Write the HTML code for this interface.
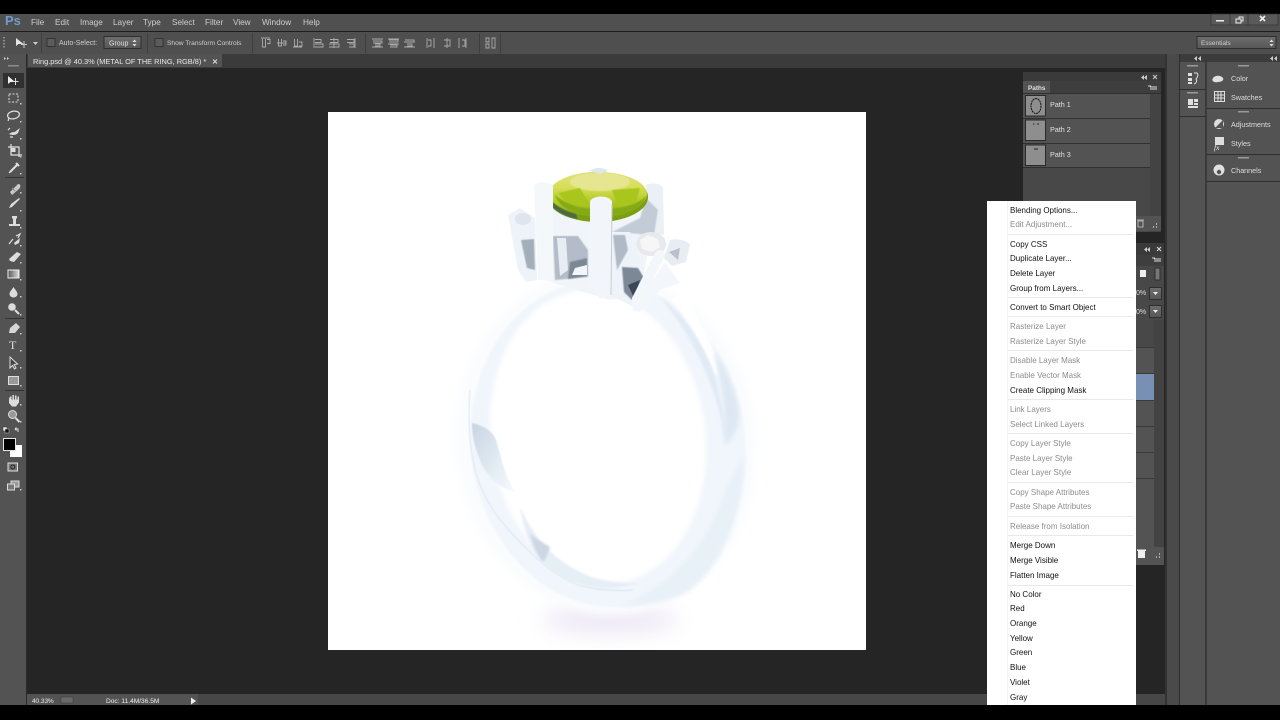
<!DOCTYPE html>
<html lang="en"><head><meta charset="utf-8"><title>Photoshop</title>
<style>
html,body{margin:0;padding:0;background:#000;width:1280px;height:720px;overflow:hidden}
svg{display:block;position:absolute;left:0;top:0;font-family:"Liberation Sans",sans-serif;filter:blur(.3px)}
text{font-size:7.2px;fill:#e2e2e2}
.m text{font-size:8.2px;fill:#cfcfcf}
.k text{fill:#111;font-size:8.7px}
.k text.d{fill:#8c8c8c}
.t{fill:none;stroke:#e0e0e0;stroke-width:1.2}
.f{fill:#dcdcdc}
.o{fill:none;stroke:#ababab;stroke-width:.9}
</style></head><body>
<svg width="1280" height="720" viewBox="0 0 1280 720" xmlns="http://www.w3.org/2000/svg">
<defs>
<filter id="b1" x="-20%" y="-20%" width="140%" height="140%"><feGaussianBlur stdDeviation="1"/></filter>
<filter id="b2" x="-30%" y="-30%" width="160%" height="160%"><feGaussianBlur stdDeviation="2.500"/></filter>
<filter id="b3" x="-30%" y="-30%" width="160%" height="160%"><feGaussianBlur stdDeviation="4"/></filter>
<filter id="b8" x="-40%" y="-60%" width="180%" height="220%"><feGaussianBlur stdDeviation="11"/></filter>
<filter id="s" x="-10%" y="-10%" width="120%" height="120%"><feGaussianBlur stdDeviation="0.5"/></filter>
<linearGradient id="gem" x1="0" y1="0" x2="0" y2="1"><stop offset="0" stop-color="#e2e27c"/><stop offset=".35" stop-color="#d6de58"/><stop offset=".65" stop-color="#b4cc28"/><stop offset="1" stop-color="#8cb014"/></linearGradient>
<linearGradient id="btn" x1="0" y1="0" x2="0" y2="1"><stop offset="0" stop-color="#6e6e6e"/><stop offset="1" stop-color="#565656"/></linearGradient>
<linearGradient id="wedge" x1="0" y1="0" x2="1" y2="1"><stop offset="0" stop-color="#c9d5e2"/><stop offset=".6" stop-color="#e4ecf4"/><stop offset="1" stop-color="#f7fafd"/></linearGradient>
<linearGradient id="grad" x1="0" y1="0" x2="1" y2="0"><stop offset="0" stop-color="#555"/><stop offset="1" stop-color="#ddd"/></linearGradient>
</defs>

<!-- base -->
<rect width="1280" height="720" fill="#000"/>
<rect y="14" width="1280" height="691" fill="#252525"/>
<!-- menu bar -->
<rect y="14" width="1280" height="17" fill="#505050"/>
<rect y="31" width="1280" height="1" fill="#1e1e1e"/>
<!-- options bar -->
<rect y="32" width="1280" height="22" fill="#4f4f4f"/>
<!-- tab row -->
<rect y="54" width="1165" height="14" fill="#3b3b3b"/>
<rect x="28" y="54" width="194" height="13" fill="#535353"/>
<!-- left toolbar -->
<rect y="54" width="27" height="651" fill="#535353"/>
<rect x="26" y="54" width="1" height="651" fill="#2a2a2a"/>
<!-- status -->
<rect x="27" y="694" width="1138" height="11" fill="#474747"/>
<rect x="27" y="694" width="171" height="11" fill="#535353"/>
<!-- right strips -->
<rect x="1165" y="54" width="2" height="651" fill="#333"/>
<rect x="1167" y="54" width="12" height="651" fill="#4a4a4a"/>
<rect x="1179" y="54" width="1" height="651" fill="#2e2e2e"/>
<rect x="1180" y="54" width="100" height="651" fill="#535353"/>
<rect x="1180" y="54" width="100" height="8" fill="#3c3c3c"/>
<rect x="1205" y="54" width="2" height="651" fill="#3a3a3a"/>
<rect x="1180" y="89" width="25" height="1" fill="#2e2e2e"/>
<rect x="1180" y="116" width="25" height="1" fill="#2e2e2e"/>
<rect x="1207" y="108" width="73" height="1" fill="#2e2e2e"/>
<rect x="1207" y="154" width="73" height="1" fill="#2e2e2e"/>
<rect x="1207" y="181" width="73" height="1" fill="#2e2e2e"/>
<g fill="#999"><rect x="1187" y="65" width="11" height="1.500"/><rect x="1187" y="92" width="11" height="1.500"/><rect x="1238" y="65" width="11" height="1.500"/><rect x="1238" y="111" width="11" height="1.500"/><rect x="1238" y="157" width="11" height="1.500"/></g>
<g fill="#ccc"><path d="M1197 56l-3 2.500 3 2.500zM1201 56l-3 2.500 3 2.500z"/><path d="M1273 56l-3 2.500 3 2.500zM1277 56l-3 2.500 3 2.500z"/></g>

<!-- canvas + ring -->
<rect x="328" y="112" width="538" height="538" fill="#fff"/>
<g>
<ellipse cx="610" cy="620" rx="68" ry="13" fill="#ece6f4" filter="url(#b8)"/>
<ellipse cx="606" cy="443" rx="150" ry="172" fill="#fafcfe" filter="url(#b3)" transform="rotate(-8 606 443)"/>
<ellipse cx="608" cy="444" rx="137" ry="164" fill="#f1f6fc" filter="url(#b1)" transform="rotate(-8 608 444)"/>
<ellipse cx="598" cy="437" rx="107" ry="147" fill="#fff" filter="url(#b2)" transform="rotate(-8 598 437)"/>
<path d="M472 423C482 425 492 430 496 440C501 458 506 478 515 492C503 490 490 478 483 467C476 452 472 438 472 423Z" fill="url(#wedge)" filter="url(#s)"/>
<path d="M470 390C468 420 469 445 475 470C485 505 503 525 523 545C545 568 565 582 585 587C605 591 620 591 633 590" fill="none" stroke="#d8e3ef" stroke-width=".9" filter="url(#s)"/>
<path d="M520 507C535 540 555 560 580 572C600 582 625 584 640 583C610 592 575 590 545 565C530 550 524 530 520 507Z" fill="#e6eef6" filter="url(#b1)"/>
<path d="M530 533C536 540 544 543 550 547C548 553 546 558 543 562C537 555 533 545 530 533Z" fill="#ccd7e3" filter="url(#b1)"/>
<path d="M660 297C692 322 705 345 715 375C722 405 727 430 726 446C718 390 695 340 660 297Z" fill="#e2ebf5" filter="url(#b1)"/>
<path d="M680 290C695 312 708 335 714 352C718 365 719 375 716 376C708 355 692 325 672 300Z" fill="#fff" filter="url(#b1)"/>
<path d="M713 350C725 365 733 385 738 405C741 420 738 432 725 446C726 415 722 380 713 350Z" fill="#dde8f3" filter="url(#b2)"/>
<path d="M744 455C744 515 722 565 690 590C675 600 650 606 620 606C660 590 700 560 722 500C730 480 735 470 744 455Z" fill="#e8f0f8" filter="url(#b2)"/>

<!-- left small stone + prong -->
<path d="M508 215L520 208L535 218L537 280L526 282L518 270Z" fill="#eef3f9"/>
<path d="M521 240L534 239L535 270L527 268Z" fill="#a3aebb" filter="url(#s)"/>
<ellipse cx="523" cy="219" rx="8" ry="6" fill="#dfe5ec"/>
<!-- basket -->
<path d="M540 205L650 205L650 240L640 295L610 300L545 280Z" fill="#f1f5fa"/>
<path d="M553 236L578 236L588 250L588 277L555 280Z" fill="#b3bcc8" filter="url(#s)"/>
<path d="M557 238L566 238L568 270L560 276Z" fill="#e8edf3"/>
<path d="M570 262L587 258L587 276L568 279Z" fill="#7d8895" filter="url(#s)"/>
<path d="M575 268L587 265L587 275L572 275Z" fill="#f2f5f9"/>
<!-- back prong right -->
<path d="M646 185C652 182 660 183 663 188L664 235L650 232Z" fill="#eaf0f6"/>
<path d="M646 198L658 210L654 235L612 232L640 218Z" fill="#c3ccd6" filter="url(#s)"/>
<!-- gem -->
<ellipse cx="598" cy="197" rx="50" ry="25" fill="#7a9e10"/>
<ellipse cx="598" cy="194" rx="49" ry="22" fill="url(#gem)"/>
<ellipse cx="600" cy="182" rx="30" ry="9" fill="#e6e690" filter="url(#s)"/>
<path d="M558 193L580 188L590 205L572 208ZM612 190L640 188L636 203L618 206Z" fill="#a8c61e" filter="url(#s)"/>
<path d="M555 195C560 210 580 217 600 217C625 217 642 210 646 196C636 206 620 209 600 209C580 209 565 204 555 195Z" fill="#86aa14" filter="url(#s)"/>
<path d="M549 203C556 213 566 217 578 219L576 214C565 211 556 206 549 199Z" fill="#4e6a3c" filter="url(#s)"/>
<!-- top hint prong -->
<path d="M590 171C594 167 604 167 608 171L600 174Z" fill="#dfe6ee"/>
<!-- front prongs -->
<path d="M534 186C537 181 548 181 553 186L553 281L538 280Z" fill="#f5f8fb"/>
<path d="M590 201C594 195 608 195 612 201L610 294L600 299L590 285Z" fill="#f2f6fa"/>
<path d="M612 205L611 295" stroke="#c2ccd7" stroke-width="1" fill="none"/>
<!-- right section -->
<path d="M612 232L630 232L640 260L640 310L612 296Z" fill="#eef3f9"/>
<path d="M613 235L625 235L628 250L617 270Z" fill="#b0bac6" filter="url(#s)"/>
<path d="M622 267L638 268L644 278L632 300L624 292Z" fill="#7d8897" filter="url(#s)"/>
<path d="M628 285L640 280L634 298Z" fill="#3b4757"/>
<ellipse cx="651" cy="244" rx="15" ry="12" fill="#e7e9ec"/>
<path d="M640 240l8-5 10 4 2 8-8 5-10-3z" fill="#f6f6f6"/>
<path d="M670 240C675 238 688 240 690 245L686 262L672 266L664 258Z" fill="#e8edf3"/>
<path d="M669 252L680 248L678 260Z" fill="#b8c1cc"/>
<path d="M655 253C660 248 665 250 665 256L642 300L633 310L632 298Z" fill="#f4f7fa"/>
<path d="M632 310L665 262L680 283L660 290L640 312Z" fill="#f3f7fb" filter="url(#s)"/>
</g>

<!-- top menu -->
<text x="5" y="25" style="font-size:13px;font-weight:bold;fill:#6f9dc7">Ps</text>
<g class="m">
<text x="31" y="25">File</text><text x="55" y="25">Edit</text><text x="80" y="25">Image</text><text x="113" y="25">Layer</text><text x="143" y="25">Type</text><text x="172" y="25">Select</text><text x="205" y="25">Filter</text><text x="233" y="25">View</text><text x="262" y="25">Window</text><text x="303" y="25">Help</text>
</g>
<!-- window controls -->
<rect x="1211" y="14" width="67" height="11" fill="#5a5a5a" stroke="#333" stroke-width=".7"/>
<path d="M1230 14v11M1248 14v11" stroke="#333" stroke-width=".7"/>
<rect x="1216" y="20" width="8" height="1.500" fill="#eee"/>
<path d="M1236 19h5v4h-5zM1239 19v-2h4v4h-2" fill="none" stroke="#eee" stroke-width="1"/>
<path d="M1260 16l5 5M1265 16l-5 5" stroke="#eee" stroke-width="1.600"/>

<!-- options -->
<g fill="#8a8a8a"><rect x="3" y="37" width="2" height="1.500"/><rect x="3" y="40" width="2" height="1.500"/><rect x="3" y="43" width="2" height="1.500"/><rect x="3" y="46" width="2" height="1.500"/></g>
<path d="M16 38l0 8 2.500-2 5 0z" fill="#e5e5e5"/>
<path d="M24 41v7M21 44.500h6" stroke="#ccc" stroke-width="1"/>
<path d="M33 42h5l-2.500 3z" fill="#ccc"/>
<rect x="41" y="33" width="1" height="20" fill="#3e3e3e"/>
<rect x="47" y="38.500" width="8" height="8" fill="#5c5c5c" stroke="#333"/>
<text x="59" y="45" style="fill:#cfcfcf;font-size:7px">Auto-Select:</text>
<rect x="104" y="36.500" width="37" height="12" fill="url(#btn)" stroke="#2e2e2e"/>
<text x="109" y="45.500" style="fill:#e0e0e0;font-size:7px">Group</text>
<path d="M134.500 39.500l2 2.500h-4zM134.500 46.500l2-2.500h-4z" fill="#ddd"/>
<rect x="147" y="33" width="1" height="20" fill="#3e3e3e"/>
<rect x="155" y="38.500" width="8" height="8" fill="#5c5c5c" stroke="#333"/>
<text x="167" y="45" style="fill:#cfcfcf;font-size:6.600px">Show Transform Controls</text>
<rect x="252" y="33" width="1" height="20" fill="#3e3e3e"/>
<g class="o">
<path d="M261 38h9M262.500 39v8h3v-8M267 39.500h3v4h-3"/><path d="M277 43h9M278.500 39v7h3v-7M283 41h3v4h-3"/><path d="M293 47h9M294.500 39v7h3v-7M299 42h3v4h-3"/>
<path d="M314 38v10M315 39.500h6v3h-6M315 44h8v3h-8"/><path d="M334 38v10M330 39.500h8v3h-8M329 44h10v3h-10"/><path d="M355 38v10M347 39.500h7v3h-7M349 44h5v3h-5"/>
<rect x="365" y="33" width="1" height="20" stroke="none" fill="#3e3e3e"/>
<path d="M372 39h11M373 41h9v2h-9M372 47h11M375 44h5v2h-5"/><path d="M388 39h11M389 40h9v2h-9M388 44h11M390 45h7v2h-7"/><path d="M404 47h11M405 40h9v2h-9M404 42h11M407 44h5v2h-5"/>
<path d="M427 38v10M428 40h3v6h-3M434 38v10"/><path d="M447 38v10M444 40h6v6h-6"/><path d="M459 38v10M466 38v10M462 40h3v6h-3"/>
<rect x="479" y="33" width="1" height="20" stroke="none" fill="#3e3e3e"/>
<path d="M486 38h3v4h-3zM486 44h3v4h-3zM492 38h3v10h-3z"/>
<rect x="500" y="33" width="1" height="20" stroke="none" fill="#3e3e3e"/>
</g>
<rect x="1197" y="36.500" width="79" height="12" fill="url(#btn)" stroke="#2e2e2e"/>
<text x="1201" y="45" style="font-size:6.500px;fill:#cfcfcf">Essentials</text>
<path d="M1271.500 39.500l2 2.500h-4zM1271.500 46.500l2-2.500h-4z" fill="#ddd"/>

<!-- tab -->
<text x="33" y="64" style="font-size:7.400px;fill:#e8e8e8">Ring.psd @ 40.3% (METAL OF THE RING, RGB/8) *</text>
<path d="M213 59.500l4 4M217 59.500l-4 4" stroke="#ddd" stroke-width="1"/>
<path d="M4 57l2 1.500-2 1.500zM7 57l2 1.500-2 1.500z" fill="#ccc"/>
<g fill="#8c8c8c"><rect x="8" y="65" width="11" height="1.500"/></g>

<!-- tools -->
<rect x="3" y="73" width="21" height="15" fill="#303030"/>
<path d="M8 76v8l2.500-2 4.500 0z" fill="#eee"/><path d="M15.500 78v7M12.500 81.500h6" stroke="#ddd" stroke-width="1"/>
<rect x="9" y="94" width="9" height="8" fill="none" stroke="#ddd" stroke-dasharray="2 1.500"/>
<ellipse cx="13.500" cy="115" rx="6" ry="3.800" class="t" transform="rotate(-10 13.500 115)"/><path d="M9 118l-1 3" class="t"/>
<path d="M9 134c4-3 5-1 7-3l4-3-2 5c-3 3-7 2-9 1z" class="f"/><path d="M8 130l2-2M10 137l3 0" class="t"/>
<path d="M8 147h11v10M11 144v11h11" class="t"/><rect x="11.500" y="148" width="4" height="4" class="f"/>
<path d="M10 172l7-7M16 163l3 3" stroke="#e0e0e0" stroke-width="2" fill="none"/><path d="M9 173l2-2" class="t"/>
<rect x="5" y="177" width="19" height="1" fill="#333"/>
<path d="M10 192l8-8c3 0 3 3 1 5l-7 6z" fill="#c8c8c8"/><path d="M12 188l3 3" stroke="#888"/>
<path d="M9 208l3-1 8-8-1-1-8 6z" class="f"/>
<path d="M9 224h11v2h-11zM13 217h3v7h-3z" class="f"/><rect x="12" y="216" width="5" height="2.500" class="f"/>
<path d="M9 244l4-5M16 236l4-2-2 4" class="t"/><path d="M14 243l6-5-1 5-4 2z" class="f"/>
<path d="M9 259l8-7 4 2-7 8-4-1z" class="f"/>
<rect x="8" y="270" width="11" height="8" fill="url(#grad)" stroke="#eee"/>
<path d="M13.500 287c-2 3-4 5-4 7 0 2 2 3.500 4 3.500s4-1.500 4-3.500c0-2-2-4-4-7z" class="f"/>
<circle cx="12" cy="307" r="3.800" class="f"/><path d="M15 310l4 4" stroke="#ddd" stroke-width="2"/>
<rect x="5" y="318" width="19" height="1" fill="#333"/>
<path d="M9 333l1-5 6-5 4 4-5 6zM9 333l4-3" fill="#d5d5d5"/>
<text x="9" y="349" style="font-family:'Liberation Serif',serif;font-size:12px;fill:#ddd">T</text>
<path d="M10 357v11l2.500-2.500 2 3.500 1.500-1-2-3.500 3.500-.5z" fill="#444" stroke="#ddd"/>
<rect x="8.500" y="376.500" width="10" height="8" fill="#999" stroke="#ddd"/>
<rect x="5" y="390" width="19" height="1" fill="#333"/>
<path d="M9 399v4l3 3.500h4l3-4v-6h-1.500v3h-1v-4h-1.500v4h-1v-4.500h-1.500v4.500h-1v-3h-1.500z" class="f"/>
<circle cx="12.500" cy="414.500" r="4" fill="#999" stroke="#ddd"/><path d="M15.500 418l4 4" stroke="#ddd" stroke-width="2"/>
<rect x="3" y="427" width="4" height="4" fill="#eee" stroke="#333" stroke-width=".5"/><rect x="5" y="429" width="4" height="4" fill="#111" stroke="#ccc" stroke-width=".5"/>
<path d="M15 429h3v3M15 429l1.500-1.500M15 429l1.500 1.500" fill="none" stroke="#ddd"/>
<rect x="10" y="445" width="12" height="12" fill="#fff"/>
<rect x="3.500" y="438.500" width="12" height="12" fill="#000" stroke="#e5e5e5"/>
<rect x="8" y="463" width="9.500" height="8" fill="#777" stroke="#ddd"/><circle cx="12.800" cy="467" r="2" fill="none" stroke="#222"/>
<path d="M11 481h8v6h-8z" fill="#999" stroke="#ddd"/><rect x="7.500" y="484" width="7" height="6" fill="#777" stroke="#ddd"/>
<g fill="#ccc"><rect x="20" y="103" width="1.500" height="1.500"/><rect x="20" y="121" width="1.500" height="1.500"/><rect x="20" y="138" width="1.500" height="1.500"/><rect x="20" y="156" width="1.500" height="1.500"/><rect x="20" y="173" width="1.500" height="1.500"/><rect x="20" y="192" width="1.500" height="1.500"/><rect x="20" y="210" width="1.500" height="1.500"/><rect x="20" y="227" width="1.500" height="1.500"/><rect x="20" y="245" width="1.500" height="1.500"/><rect x="20" y="262" width="1.500" height="1.500"/><rect x="20" y="279" width="1.500" height="1.500"/><rect x="20" y="296" width="1.500" height="1.500"/><rect x="20" y="314" width="1.500" height="1.500"/><rect x="20" y="333" width="1.500" height="1.500"/><rect x="20" y="350" width="1.500" height="1.500"/><rect x="20" y="367" width="1.500" height="1.500"/><rect x="20" y="385" width="1.500" height="1.500"/><rect x="20" y="404" width="1.500" height="1.500"/><rect x="20" y="421" width="1.500" height="1.500"/><rect x="20" y="489" width="1.500" height="1.500"/></g>

<!-- status -->
<text x="32" y="703" style="font-size:6.400px;fill:#eee">40.33%</text>
<rect x="61" y="697" width="12" height="6" fill="#6a6a6a" stroke="#3d3d3d" stroke-width=".6"/>
<text x="106" y="703" style="font-size:6.600px;fill:#eee">Doc: 11.4M/36.5M</text>
<path d="M191 697.500l5 3.500-5 3.500z" fill="#eee"/>

<!-- Paths panel -->
<rect x="1023" y="72" width="138" height="160" fill="#484848"/>
<rect x="1023" y="72" width="138" height="9" fill="#3a3a3a"/>
<rect x="1023" y="81" width="138" height="12" fill="#3e3e3e"/>
<rect x="1023" y="81" width="27" height="12" fill="#535353"/>
<rect x="1023" y="93" width="127" height="75" fill="#535353"/>
<rect x="1150" y="93" width="11" height="139" fill="#434343"/>
<path d="M1023 93.500h138M1023 118.500h127M1023 143.500h127M1023 167.500h127" stroke="#303030"/>
<text x="1028" y="90" style="font-size:6.400px;font-weight:bold">Paths</text>
<path d="M1147 75l-3 2.500 3 2.500zM1144 75l-3 2.500 3 2.500z" fill="#ccc"/>
<path d="M1153 75l4 4M1157 75l-4 4" stroke="#ccc"/>
<path d="M1148 86h3M1150 87h7M1150 89h7" stroke="#ddd" stroke-width="1"/>
<rect x="1025.500" y="95.500" width="20" height="20.500" fill="#8e8e8e" stroke="#2a2a2a"/>
<rect x="1025.500" y="120" width="20" height="20.500" fill="#8e8e8e" stroke="#2a2a2a"/>
<rect x="1025.500" y="145" width="20" height="20.500" fill="#8e8e8e" stroke="#2a2a2a"/>
<ellipse cx="1036" cy="106" rx="5" ry="7.500" fill="none" stroke="#111" stroke-width="1" stroke-dasharray="2 .6"/>
<path d="M1033 124h1.500M1037 124h2M1034 149h4" stroke="#222" stroke-width="1"/>
<text x="1050" y="107">Path 1</text><text x="1050" y="132">Path 2</text><text x="1050" y="157">Path 3</text>
<rect x="1136" y="216" width="25" height="15" fill="#535353"/>
<path d="M1138 221h5v6h-5zM1137 220h7" fill="none" stroke="#ccc" stroke-width=".8"/>
<path d="M1153 227h1M1156 227h1M1156 224h1" stroke="#ddd" stroke-width="1.200"/>

<!-- Layers panel sliver -->
<rect x="1136" y="243" width="28" height="322" fill="#484848"/>
<rect x="1136" y="243" width="28" height="12" fill="#3a3a3a"/>
<rect x="1136" y="255" width="28" height="11" fill="#3e3e3e"/>
<rect x="1136" y="266" width="28" height="54" fill="#484848"/>
<path d="M1147 247l-3 2.500 3 2.500zM1150 247l-3 2.500 3 2.500z" fill="#ccc"/>
<path d="M1157 247l4 4M1161 247l-4 4" stroke="#ddd"/>
<path d="M1152 258h3M1154 259h7M1154 261h7" stroke="#ddd"/>
<rect x="1140" y="270" width="6" height="7" fill="#eee"/>
<rect x="1155" y="268" width="5" height="12" fill="#777" stroke="#2e2e2e"/>
<text x="1136" y="295" style="font-size:7px;fill:#ddd">0%</text><text x="1136" y="314" style="font-size:7px;fill:#ddd">0%</text>
<rect x="1149.500" y="287.500" width="12" height="12" fill="url(#btn)" stroke="#2e2e2e"/><path d="M1153 292h5l-2.500 3z" fill="#eee"/>
<rect x="1149.500" y="305.500" width="12" height="12" fill="url(#btn)" stroke="#2e2e2e"/><path d="M1153 310h5l-2.500 3z" fill="#eee"/>
<rect x="1136" y="320" width="18" height="227" fill="#535353"/>
<rect x="1136" y="320" width="18" height="27" fill="#484848"/>
<rect x="1136" y="374" width="18" height="26" fill="#7890b4"/>
<path d="M1136 347.500h18M1136 373.500h18M1136 400.500h18M1136 426.500h18M1136 452.500h18M1136 478.500h18" stroke="#3a3a3a"/>
<rect x="1154" y="320" width="10" height="227" fill="#434343"/>
<rect x="1136" y="547" width="28" height="18" fill="#535353"/>
<rect x="1138" y="551" width="7" height="7" fill="#eee"/><rect x="1137" y="549.500" width="9" height="1.500" fill="#eee"/>
<path d="M1156 557h1M1159 557h1M1159 554h1" stroke="#ddd" stroke-width="1.200"/>

<!-- dock icons -->
<g fill="#e0e0e0">
<rect x="1188" y="73" width="4" height="3"/><rect x="1188" y="78" width="4" height="3"/><rect x="1188" y="82" width="4" height="2"/>
<path d="M1194 73h3c2 2 0 5-1 6 1 1 1 4-2 5" fill="none" stroke="#e0e0e0"/>
<rect x="1188" y="99" width="5" height="6"/><rect x="1194" y="99" width="4" height="3"/><rect x="1194" y="103" width="4" height="2"/><rect x="1188" y="106" width="10" height="2"/>
<path d="M1213 78c2-3 8-3 10 0 1 2-1 4-5 4-4 1-7-1-5-4z"/>
<rect x="1214.500" y="91.500" width="10" height="10" fill="none" stroke="#e0e0e0"/><path d="M1218 92v9M1221 92v9M1215 95h9M1215 98h9" stroke="#e0e0e0"/>
<circle cx="1219" cy="124" r="5" fill="#ddd"/><path d="M1215 128l8-8v8z" fill="#555"/>
<rect x="1215" y="137" width="9" height="8" fill="#ddd"/>
<circle cx="1219" cy="170" r="5.500"/>
</g>
<text x="1214" y="150" style="font-family:'Liberation Serif',serif;font-style:italic;font-size:7.500px;fill:#eee">fx</text>
<circle cx="1219" cy="172" r="2.200" fill="#555"/>
<g><text x="1231" y="81" style="fill:#ddd">Color</text><text x="1231" y="100" style="fill:#ddd">Swatches</text><text x="1231" y="127" style="fill:#ddd">Adjustments</text><text x="1231" y="146" style="fill:#ddd">Styles</text><text x="1231" y="173" style="fill:#ddd">Channels</text></g>

<!-- context menu -->
<rect x="987" y="201" width="149" height="504" fill="#fff"/>
<rect x="1007" y="201" width="1" height="504" fill="#f3f3f3"/>
<g fill="#e9e9e9"><rect x="1008" y="234" width="125" height="1"/><rect x="1008" y="297" width="125" height="1"/><rect x="1008" y="316" width="125" height="1"/><rect x="1008" y="350" width="125" height="1"/><rect x="1008" y="399" width="125" height="1"/><rect x="1008" y="433" width="125" height="1"/><rect x="1008" y="482" width="125" height="1"/><rect x="1008" y="516" width="125" height="1"/><rect x="1008" y="535" width="125" height="1"/><rect x="1008" y="585" width="125" height="1"/></g>
<g class="k" transform="translate(1010 0) scale(.92 1)">
<text x="0" y="213">Blending Options...</text>
<text x="0" y="227" class="d">Edit Adjustment...</text>
<text x="0" y="247">Copy CSS</text>
<text x="0" y="261">Duplicate Layer...</text>
<text x="0" y="276">Delete Layer</text>
<text x="0" y="291">Group from Layers...</text>
<text x="0" y="310">Convert to Smart Object</text>
<text x="0" y="329" class="d">Rasterize Layer</text>
<text x="0" y="344" class="d">Rasterize Layer Style</text>
<text x="0" y="363" class="d">Disable Layer Mask</text>
<text x="0" y="378" class="d">Enable Vector Mask</text>
<text x="0" y="393">Create Clipping Mask</text>
<text x="0" y="412" class="d">Link Layers</text>
<text x="0" y="427" class="d">Select Linked Layers</text>
<text x="0" y="446" class="d">Copy Layer Style</text>
<text x="0" y="461" class="d">Paste Layer Style</text>
<text x="0" y="475" class="d">Clear Layer Style</text>
<text x="0" y="495" class="d">Copy Shape Attributes</text>
<text x="0" y="509" class="d">Paste Shape Attributes</text>
<text x="0" y="529" class="d">Release from Isolation</text>
<text x="0" y="548">Merge Down</text>
<text x="0" y="563">Merge Visible</text>
<text x="0" y="578">Flatten Image</text>
<text x="0" y="597">No Color</text>
<text x="0" y="611">Red</text>
<text x="0" y="626">Orange</text>
<text x="0" y="641">Yellow</text>
<text x="0" y="655">Green</text>
<text x="0" y="670">Blue</text>
<text x="0" y="685">Violet</text>
<text x="0" y="700">Gray</text>
</g>
</svg>
</body></html>
